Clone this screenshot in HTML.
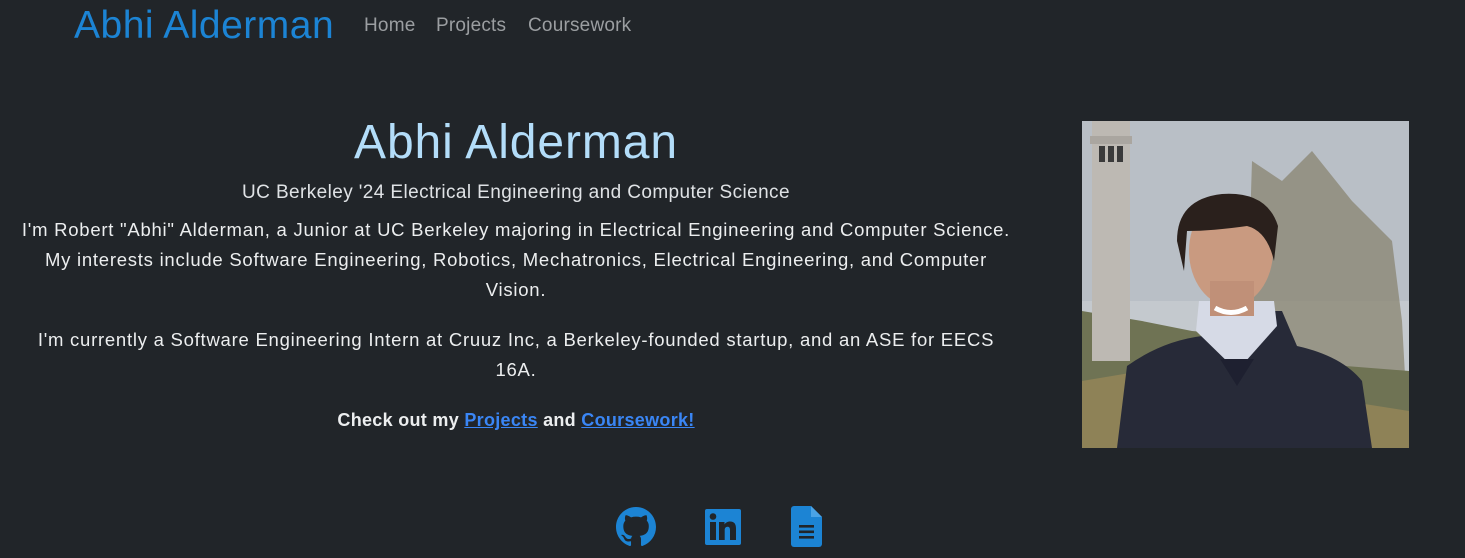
<!DOCTYPE html>
<html><head><meta charset="utf-8">
<style>
*{margin:0;padding:0;box-sizing:border-box}
html,body{width:1465px;height:558px;overflow:hidden;background:#212529;font-family:"Liberation Sans","DejaVu Sans",sans-serif}
.brand{position:absolute;left:74px;top:4px;font-size:39px;color:#1c84d4;letter-spacing:0.5px;white-space:nowrap}
.nav{position:absolute;top:15px;font-size:19px;color:#9b9ea1;white-space:nowrap;letter-spacing:0.2px}
.col{position:absolute;left:0;width:1032px;text-align:center;color:#eceeef;white-space:nowrap}
h1{position:absolute;left:0;width:1032px;text-align:center;top:115px;font-size:48px;font-weight:normal;color:#b3ddf9;letter-spacing:0.9px}
.sub{top:182px;font-size:19px;color:#dfe2e5;letter-spacing:0.4px}
.p{font-size:18.5px;line-height:30px;letter-spacing:0.75px}
a{color:#3a86f5;text-decoration:underline}
.ic{position:absolute;top:507px}
</style></head><body>
<div class="brand">Abhi Alderman</div>
<div class="nav" style="left:364px">Home</div>
<div class="nav" style="left:436px">Projects</div>
<div class="nav" style="left:528px">Coursework</div>

<h1>Abhi Alderman</h1>
<div class="col sub">UC Berkeley '24 Electrical Engineering and Computer Science</div>
<div class="col p" style="top:215px">I'm Robert "Abhi" Alderman, a Junior at UC Berkeley majoring in Electrical Engineering and Computer Science.<br>My interests include Software Engineering, Robotics, Mechatronics, Electrical Engineering, and Computer<br>Vision.</div>
<div class="col p" style="top:325px">I'm currently a Software Engineering Intern at Cruuz Inc, a Berkeley-founded startup, and an ASE for EECS<br>16A.</div>
<div class="col p" style="top:405px;font-weight:bold;font-size:18px;letter-spacing:0.3px">Check out my <a>Projects</a> and <a>Coursework!</a></div>

<svg style="position:absolute;left:1082px;top:121px" width="327" height="327" viewBox="0 0 327 327">
<rect width="327" height="327" fill="#c4c9ce"/>
<rect width="327" height="180" fill="#b9bfc6"/>
<path d="M170 40 L200 60 L230 30 L270 80 L310 120 L320 200 L327 327 L180 327 L165 200 Z" fill="#8a8470" opacity="0.75"/>
<path d="M0 190 L60 200 L110 210 L170 215 L200 240 L327 250 L327 327 L0 327 Z" fill="#6f7354"/>
<path d="M0 260 L120 240 L200 270 L327 290 L327 327 L0 327 Z" fill="#8e8257"/>
<rect x="10" y="0" width="38" height="240" fill="#bdb9b3"/>
<rect x="8" y="15" width="42" height="8" fill="#aaa6a0"/>
<rect x="17" y="25" width="6" height="16" fill="#3a3a3a"/><rect x="26" y="25" width="6" height="16" fill="#3a3a3a"/><rect x="35" y="25" width="6" height="16" fill="#3a3a3a"/>
<path d="M35 327 L45 245 Q80 220 120 215 L140 190 L200 190 L215 225 Q260 235 280 260 L290 327 Z" fill="#272a38"/>
<path d="M114 210 L155 250 L195 205 L192 180 L117 180 Z" fill="#d6dae6"/>
<path d="M138 238 L155 265 L172 238 Z" fill="#1e2030"/>
<ellipse cx="149" cy="130" rx="42" ry="55" fill="#c99a80"/>
<rect x="128" y="160" width="44" height="35" fill="#c09078"/>
<path d="M95 120 Q95 78 140 73 Q185 70 196 105 L192 140 Q185 110 165 105 Q130 110 105 110 L102 150 Z" fill="#2a201c"/>
<path d="M133 187 Q149 196 165 187" stroke="#fff" stroke-width="5" fill="none"/>
</svg>

<svg class="ic" style="left:616px" width="40" height="40" viewBox="0 0 16 16"><path fill="#1c84d4" d="M8 0C3.580 0 0 3.58 0 8c0 3.54 2.29 6.53 5.47 7.590.4.07.55-.17.55-.38 0-.19-.01-.82-.01-1.49-2.010.37-2.530-.49-2.690-.94-.09-.23-.48-.94-.82-1.13-.28-.15-.68-.52-.01-.53.63-.01 1.08.58 1.23.82.72 1.21 1.87.87 2.33.66.07-.52.28-.87.51-1.07-1.78-.2-3.64-.89-3.64-3.95 0-.87.31-1.59.82-2.15-.08-.2-.36-1.02.08-2.12 0 0 .67-.21 2.2.82.64-.18 1.32-.27 2-.27.68 0 1.36.09 2 .27 1.53-1.04 2.2-.82 2.2-.82.44 1.1.16 1.92.08 2.12.51.56.82 1.27.82 2.15 0 3.07-1.87 3.75-3.65 3.95.29.25.54.73.54 1.48 0 1.07-.01 1.93-.01 2.2 0 .21.15.46.55.38A8.013 8.013 0 0016 8c0-4.42-3.58-8-8-8z"/></svg>
<svg class="ic" style="left:705px;top:509px" width="36" height="36" viewBox="0 0 36 36"><rect width="36" height="36" rx="2" fill="#1c84d4"/><rect x="5" y="13" width="6" height="18" fill="#212529"/><circle cx="8" cy="7.5" r="3.3" fill="#212529"/><path d="M14 13h5.5v2.5c1-1.8 3-3 5.5-3 4.5 0 6 2.8 6 7V31h-6V21c0-2-.6-3.3-2.5-3.3-2 0-2.8 1.5-2.8 3.3V31H14z" fill="#212529"/></svg>
<svg class="ic" style="left:791px;top:506px" width="31" height="41" viewBox="0 0 31 41"><path d="M3 0H20L31 11V38a3 3 0 0 1-3 3H3a3 3 0 0 1-3-3V3a3 3 0 0 1 3-3z" fill="#1c84d4"/><path d="M20 0V11H31" fill="#4aa3e6"/><rect x="8" y="19" width="15" height="2.6" fill="#212529"/><rect x="8" y="24.5" width="15" height="2.6" fill="#212529"/><rect x="8" y="30" width="15" height="2.6" fill="#212529"/></svg>
</body></html>
